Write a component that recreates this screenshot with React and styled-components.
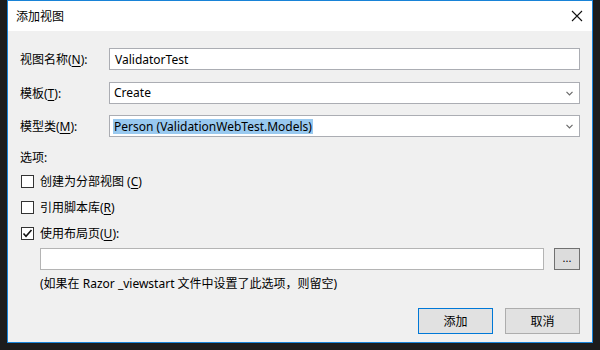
import React from "react";
import styled, { createGlobalStyle } from "styled-components";

const GlobalStyle = createGlobalStyle`
  html, body {
    margin: 0;
    padding: 0;
    background: #1c1c1c;
  }
  body {
    font-family: "Noto Sans", "Noto Sans CJK SC", sans-serif;
    font-size: 12px;
    color: #000;
  }
`;

const Screen = styled.div`
  width: 600px;
  height: 350px;
  box-sizing: border-box;
  padding: 0 7px 0 7px;
  background: #1c1c1c;
`;

const Window = styled.div`
  width: 586px;
  height: 343px;
  box-sizing: border-box;
  border: 1px solid #1883d7;
  display: flex;
  flex-direction: column;
  background: #f0f0f0;
`;

const TitleBar = styled.div`
  height: 30px;
  flex: none;
  background: #fff;
  display: flex;
  align-items: center;
  justify-content: space-between;
  padding: 0 9px 0 8px;
`;

const Title = styled.span`
  font-size: 12px;
`;

const Body = styled.div`
  flex: 1;
  display: flex;
  flex-direction: column;
  padding: 17px 12px 0 12px;
`;

const Form = styled.div`
  display: grid;
  grid-template-columns: 89px 1fr;
  row-gap: 11.5px;
  align-items: center;
`;

const Label = styled.span`
  white-space: pre;
`;

const Key = styled.span`
  text-decoration: underline;
  text-underline-offset: 2px;
`;

const Field = styled.div`
  position: relative;
  height: 22px;
  box-sizing: border-box;
  border: 1px solid #abadb3;
  background: #fff;
  display: flex;
  align-items: center;
  padding-left: ${p => (p.$select ? "3px" : "4px")};
`;

const Value = styled.span`
  line-height: 15px;
  padding: 0 1px;
  background: ${p => (p.$selected ? "#99c9ef" : "transparent")};
`;

const Chevron = styled.svg`
  position: absolute;
  right: 6px;
  top: 8px;
`;

const Section = styled.div`
  margin-top: 11px;
`;

const Options = styled.div`
  display: flex;
  flex-direction: column;
  gap: 10px;
  margin-top: 7px;
  padding-left: 1px;
`;

const CheckRow = styled.label`
  display: flex;
  align-items: center;
  gap: 6px;
  height: 16px;
`;

const Box = styled.span`
  width: 13px;
  height: 13px;
  box-sizing: border-box;
  border: 1px solid #333;
  background: #fff;
  display: flex;
  align-items: center;
  justify-content: center;
`;

const LayoutRow = styled.div`
  display: flex;
  gap: 10px;
  margin-top: 7px;
  padding-left: 20px;
`;

const PathInput = styled.div`
  flex: 1;
  height: 22px;
  box-sizing: border-box;
  border: 1px solid #b4b4b4;
  background: #fff;
`;

const Browse = styled.div`
  width: 26px;
  height: 22px;
  box-sizing: border-box;
  border: 1px solid #707070;
  background: #dcdcdc;
  display: flex;
  align-items: center;
  justify-content: center;
  font-size: 11px;
  line-height: 1;
  padding-bottom: 3px;
`;

const Hint = styled.div`
  padding-left: 20px;
  margin-top: 4px;
`;

const Footer = styled.div`
  display: flex;
  justify-content: flex-end;
  gap: 12px;
  margin-top: 16px;
`;

const Button = styled.div`
  width: 75px;
  height: 26px;
  box-sizing: border-box;
  border: 1px solid ${p => (p.$primary ? "#0078d7" : "#adadad")};
  background: #e1e1e1;
  display: flex;
  align-items: center;
  justify-content: center;
`;

const Close = () => (
  <svg width="12" height="12" viewBox="0 0 12 12">
    <path d="M1 1 L11 11 M11 1 L1 11" stroke="#111" strokeWidth="1.1" fill="none" />
  </svg>
);

const Down = () => (
  <Chevron width="7" height="5" viewBox="0 0 7 5">
    <path d="M0.5 0.8 L3.5 3.8 L6.5 0.8" stroke="#6a6a6a" strokeWidth="1.2" fill="none" />
  </Chevron>
);

const Check = ({ on }) => (
  <Box>
    {on && (
      <svg width="11" height="11" viewBox="0 0 11 11">
        <path d="M1.5 5.5 L4 8.2 L9.5 2" stroke="#111" strokeWidth="1.6" fill="none" />
      </svg>
    )}
  </Box>
);

const options = [
  { text: "创建为分部视图 (", key: "C", tail: ")", on: false },
  { text: "引用脚本库(", key: "R", tail: ")", on: false },
  { text: "使用布局页(", key: "U", tail: "):", on: true },
];

const App = () => (
  <>
    <GlobalStyle />
    <Screen>
      <Window>
        <TitleBar>
          <Title>添加视图</Title>
          <Close />
        </TitleBar>
        <Body>
          <Form>
            <Label>
              视图名称(<Key>N</Key>):
            </Label>
            <Field>
              <Value>ValidatorTest</Value>
            </Field>
            <Label>
              模板(<Key>T</Key>):
            </Label>
            <Field $select>
              <Value>Create</Value>
              <Down />
            </Field>
            <Label>
              模型类(<Key>M</Key>):
            </Label>
            <Field $select>
              <Value $selected>Person (ValidationWebTest.Models)</Value>
              <Down />
            </Field>
          </Form>
          <Section>选项:</Section>
          <Options>
            {options.map(o => (
              <CheckRow key={o.key}>
                <Check on={o.on} />
                <span>
                  {o.text}
                  <Key>{o.key}</Key>
                  {o.tail}
                </span>
              </CheckRow>
            ))}
          </Options>
          <LayoutRow>
            <PathInput />
            <Browse>...</Browse>
          </LayoutRow>
          <Hint>(如果在 Razor _viewstart 文件中设置了此选项，则留空)</Hint>
          <Footer>
            <Button $primary>添加</Button>
            <Button>取消</Button>
          </Footer>
        </Body>
      </Window>
    </Screen>
  </>
);

export default App;
